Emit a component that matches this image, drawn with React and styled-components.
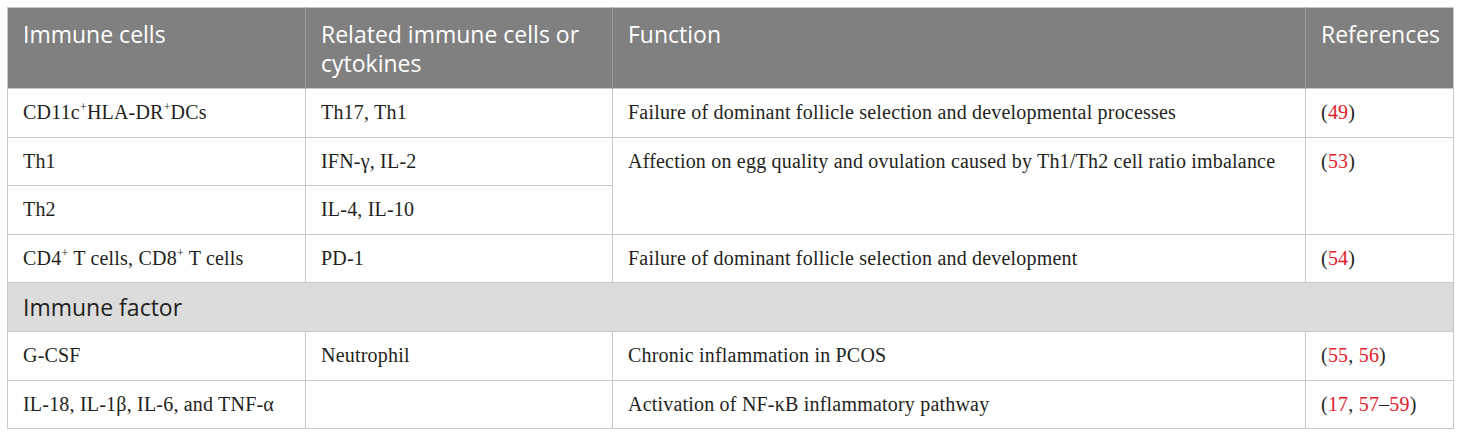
import React from 'react';
import styled, { createGlobalStyle } from 'styled-components';

const GlobalStyle = createGlobalStyle`
  html, body {
    margin: 0;
    padding: 0;
    background: #ffffff;
  }
`;

const Page = styled.div`
  padding: 7px 0 0 7px;
`;

const Table = styled.table`
  width: 1446px;
  border-collapse: collapse;
  table-layout: fixed;
  border: 1px solid #c9c9c9;
`;

const HeadCell = styled.th`
  background: #808080;
  color: #ffffff;
  font-family: "Open Sans", "Liberation Sans", sans-serif;
  font-weight: 400;
  font-size: 23px;
  line-height: 29px;
  text-align: left;
  vertical-align: top;
  height: 81px;
  box-sizing: border-box;
  padding: 12px 15px 0 15px;
  border-left: 1px solid #9a9a9a;
  &:first-child {
    border-left: none;
  }
`;

const Cell = styled.td`
  font-family: "Liberation Serif", "Times New Roman", serif;
  font-size: 20px;
  letter-spacing: 0.2px;
  line-height: 22px;
  color: #231f20;
  vertical-align: top;
  height: 48.6px;
  box-sizing: border-box;
  padding: 12px 15px 0 15px;
  border: 1px solid #c9c9c9;
`;

const SectionCell = styled.td`
  background: #dcdcdc;
  font-family: "Open Sans", "Liberation Sans", sans-serif;
  font-size: 23px;
  line-height: 28px;
  color: #231f20;
  height: 48.6px;
  box-sizing: border-box;
  padding: 10px 15px 0 15px;
  vertical-align: top;
  border: 1px solid #c9c9c9;
`;

const Sup = styled.sup`
  font-size: 12px;
  line-height: 0;
  vertical-align: 8px;
`;

const Ref = styled.span`
  color: #e3202a;
`;

function Refs({ items }) {
  return (
    <>
      (
      {items.map((it, i) => (
        <React.Fragment key={i}>
          {i > 0 && ', '}
          {Array.isArray(it) ? (
            <>
              <Ref>{it[0]}</Ref>–<Ref>{it[1]}</Ref>
            </>
          ) : (
            <Ref>{it}</Ref>
          )}
        </React.Fragment>
      ))}
      )
    </>
  );
}

export default function App() {
  return (
    <Page>
      <GlobalStyle />
      <Table>
        <colgroup>
          <col style={{ width: 298 }} />
          <col style={{ width: 307 }} />
          <col style={{ width: 693 }} />
          <col style={{ width: 148 }} />
        </colgroup>
        <thead>
          <tr>
            <HeadCell>Immune cells</HeadCell>
            <HeadCell>Related immune cells or cytokines</HeadCell>
            <HeadCell>Function</HeadCell>
            <HeadCell>References</HeadCell>
          </tr>
        </thead>
        <tbody>
          <tr>
            <Cell>
              CD11c<Sup>+</Sup>HLA-DR<Sup>+</Sup>DCs
            </Cell>
            <Cell>Th17, Th1</Cell>
            <Cell>Failure of dominant follicle selection and developmental processes</Cell>
            <Cell>
              <Refs items={['49']} />
            </Cell>
          </tr>
          <tr>
            <Cell>Th1</Cell>
            <Cell>IFN-γ, IL-2</Cell>
            <Cell rowSpan={2}>
              Affection on egg quality and ovulation caused by Th1/Th2 cell ratio imbalance
            </Cell>
            <Cell rowSpan={2}>
              <Refs items={['53']} />
            </Cell>
          </tr>
          <tr>
            <Cell>Th2</Cell>
            <Cell>IL-4, IL-10</Cell>
          </tr>
          <tr>
            <Cell>
              CD4<Sup>+</Sup> T cells, CD8<Sup>+</Sup> T cells
            </Cell>
            <Cell>PD-1</Cell>
            <Cell>Failure of dominant follicle selection and development</Cell>
            <Cell>
              <Refs items={['54']} />
            </Cell>
          </tr>
          <tr>
            <SectionCell colSpan={4}>Immune factor</SectionCell>
          </tr>
          <tr>
            <Cell>G-CSF</Cell>
            <Cell>Neutrophil</Cell>
            <Cell>Chronic inflammation in PCOS</Cell>
            <Cell>
              <Refs items={['55', '56']} />
            </Cell>
          </tr>
          <tr>
            <Cell>IL-18, IL-1β, IL-6, and TNF-α</Cell>
            <Cell />
            <Cell>Activation of NF-κB inflammatory pathway</Cell>
            <Cell>
              <Refs items={['17', ['57', '59']]} />
            </Cell>
          </tr>
        </tbody>
      </Table>
    </Page>
  );
}
